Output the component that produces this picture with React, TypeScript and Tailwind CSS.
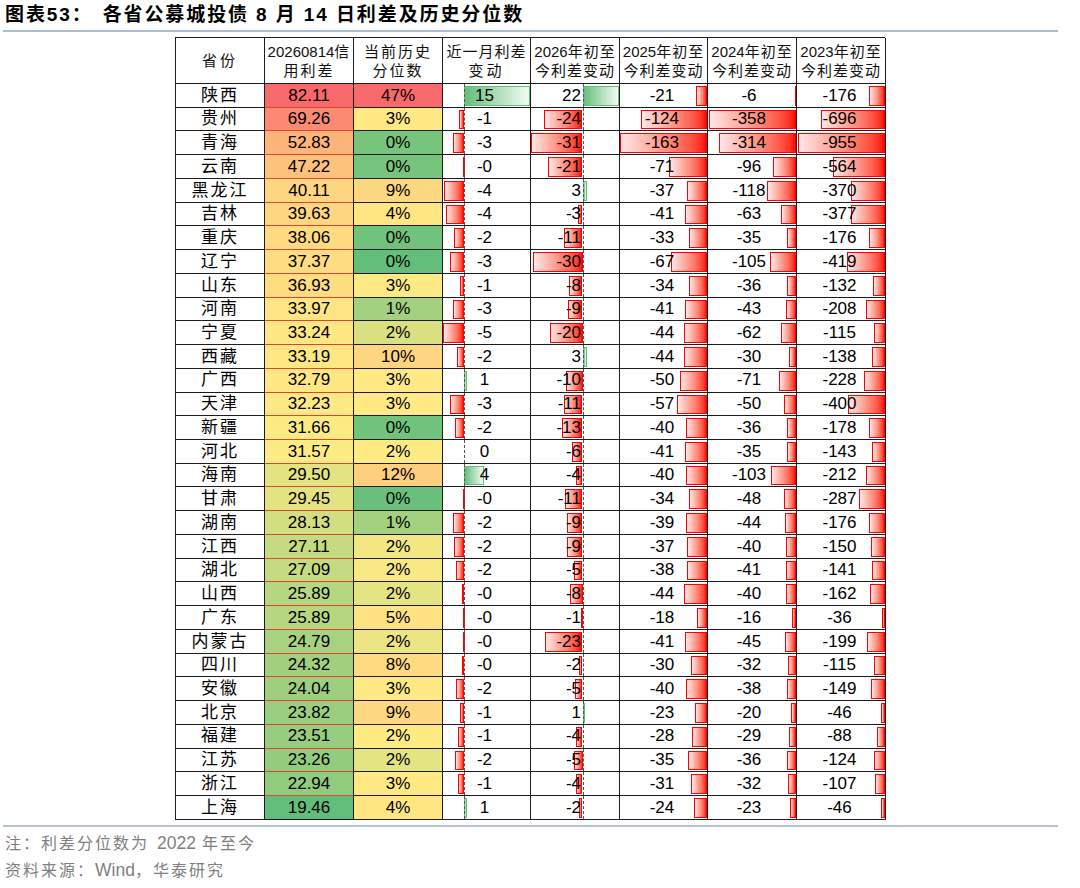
import React from 'react';

type Row = {
  p: string;
  s: number;
  pct: string;
  pv: number;
  md: string;
  m: number;
  d26: string;
  y26: number;
  y25: number;
  y24: number;
  y23: number;
};

const raw: [string, number, string, number, string, number, string, number, number, number, number][] = [
  ['陕西', 82.11, '47%', 47, '15', 15.3, '22', 22.3, -21, -6, -176],
  ['贵州', 69.26, '3%', 3.2, '-1', -1.1, '-24', -23.5, -124, -358, -696],
  ['青海', 52.83, '0%', 0.3, '-3', -2.6, '-31', -31, -163, -314, -955],
  ['云南', 47.22, '0%', 0.3, '-0', -0.2, '-21', -21, -71, -96, -564],
  ['黑龙江', 40.11, '9%', 9, '-4', -4.7, '3', 3, -37, -118, -370],
  ['吉林', 39.63, '4%', 4.1, '-4', -4.3, '-3', -3, -41, -63, -377],
  ['重庆', 38.06, '0%', 0.2, '-2', -2.4, '-11', -11, -33, -35, -176],
  ['辽宁', 37.37, '0%', 0, '-3', -3.2, '-30', -30, -67, -105, -419],
  ['山东', 36.93, '3%', 3, '-1', -0.9, '-8', -8, -34, -36, -132],
  ['河南', 33.97, '1%', 1, '-3', -2.6, '-9', -9, -41, -43, -208],
  ['宁夏', 33.24, '2%', 1.8, '-5', -4.9, '-20', -20, -44, -62, -115],
  ['西藏', 33.19, '10%', 10, '-2', -1.6, '3', 3, -44, -30, -138],
  ['广西', 32.79, '3%', 3, '1', 0.8, '-10', -10, -50, -71, -228],
  ['天津', 32.23, '3%', 3, '-3', -3.2, '-11', -11.5, -57, -50, -400],
  ['新疆', 31.66, '0%', 0.2, '-2', -2.1, '-13', -12.7, -40, -36, -178],
  ['河北', 31.57, '2%', 2.4, '0', 0, '-6', -6.4, -41, -35, -143],
  ['海南', 29.5, '12%', 12, '4', 4.6, '-4', -4, -40, -103, -212],
  ['甘肃', 29.45, '0%', 0.1, '-0', -0.2, '-11', -10.7, -34, -48, -287],
  ['湖南', 28.13, '1%', 1, '-2', -2.5, '-9', -9.4, -39, -44, -176],
  ['江西', 27.11, '2%', 2.2, '-2', -2.3, '-9', -9.4, -37, -40, -150],
  ['湖北', 27.09, '2%', 2.3, '-2', -1.8, '-5', -5.4, -38, -41, -141],
  ['山西', 25.89, '2%', 2.0, '-0', -0.45, '-8', -7.5, -44, -40, -162],
  ['广东', 25.89, '5%', 5, '-0', -0.2, '-1', -1.2, -18, -16, -36],
  ['内蒙古', 24.79, '2%', 2.1, '-0', -0.2, '-23', -22.6, -41, -45, -199],
  ['四川', 24.32, '8%', 8, '-0', -0.4, '-2', -2, -30, -32, -115],
  ['安徽', 24.04, '3%', 3, '-2', -1.9, '-5', -4.7, -40, -38, -149],
  ['北京', 23.82, '9%', 9, '-1', -1.0, '1', 0.8, -23, -20, -46],
  ['福建', 23.51, '2%', 2.4, '-1', -1.4, '-4', -4, -28, -29, -88],
  ['江苏', 23.26, '2%', 2.0, '-2', -2.1, '-5', -5, -35, -36, -124],
  ['浙江', 22.94, '3%', 3, '-1', -1.4, '-4', -3.7, -31, -32, -107],
  ['上海', 19.46, '4%', 4, '1', 0.8, '-2', -2, -24, -23, -46],
];

const rows: Row[] = raw.map((r) => ({
  p: r[0],
  s: r[1],
  pct: r[2],
  pv: r[3],
  md: r[4],
  m: r[5],
  d26: r[6],
  y26: r[7],
  y25: r[8],
  y24: r[9],
  y23: r[10],
}));

const GREEN = [99, 190, 123];
const YELLOW = [255, 235, 132];
const RED = [248, 105, 107];

function mix(a: number[], b: number[], t: number) {
  const c = a.map((x, i) => Math.round(x + (b[i] - x) * Math.max(0, Math.min(1, t))));
  return `rgb(${c[0]},${c[1]},${c[2]})`;
}

function scale3(v: number, min: number, mid: number, max: number) {
  if (v <= mid) return mix(GREEN, YELLOW, (v - min) / (mid - min));
  return mix(YELLOW, RED, (v - mid) / (max - mid));
}

function Bar({ v, axis, k }: { v: number; axis: number; k: number }) {
  if (v === 0) return null;
  const w = Math.max(1.5, Math.abs(v) * k);
  if (v < 0) {
    return (
      <div
        className="absolute top-[2px] bottom-[1px] border border-[#ff0000] bg-linear-to-l from-[#ff0000] to-[#ffe6e6]"
        style={{ left: axis - w, width: w }}
      />
    );
  }
  return (
    <div
      className="absolute top-[2px] bottom-[1px] border border-[#63be7b] bg-linear-to-r from-[#63be7b] to-[#f3faf5]"
      style={{ left: axis, width: w }}
    />
  );
}

function Axis({ at }: { at: number }) {
  return <div className="absolute top-0 bottom-0 w-0 border-l border-dashed border-[#555]" style={{ left: at }} />;
}

const cell = 'relative flex items-center border-r border-b border-[#1c1c1c] h-[23.74px] text-[17px] text-black overflow-hidden';

function Head({ a, b }: { a: React.ReactNode; b?: React.ReactNode }) {
  return (
    <div className="flex flex-col items-center justify-center border-r border-b border-[#1c1c1c] h-[46px] text-[15px] leading-[19px] tracking-[1px] text-[#111]">
      <div>{a}</div>
      {b && <div>{b}</div>}
    </div>
  );
}

export default function App() {
  const sSorted = rows.map((r) => r.s).sort((a, b) => a - b);
  const sMid = sSorted[Math.floor(sSorted.length / 2)];
  const pSorted = rows.map((r) => r.pv).sort((a, b) => a - b);
  const pMid = pSorted[Math.floor(pSorted.length / 2)];
  const sMin = sSorted[0];
  const sMax = sSorted[sSorted.length - 1];
  const pMin = pSorted[0];
  const pMax = pSorted[pSorted.length - 1];

  return (
    <div
      className="w-[1080px] h-[888px] bg-white overflow-hidden"
      style={{ fontFamily: '"Liberation Sans", "Noto Sans CJK SC", Arial, sans-serif' }}
    >
      <div className="h-[30px] pl-[5px] flex items-center text-[19px] font-bold tracking-[1.9px] text-black">
        <span>图表53：</span>
        <span className="ml-[10px]">各省公募城投债 8 月 14 日利差及历史分位数</span>
      </div>
      <div className="ml-[3px] w-[1055px] h-[2px] bg-[#a9bcd0]" />

      <div className="ml-[175px] mt-[5px] w-[710px] border-l border-t border-[#1c1c1c]">
        <div className="grid grid-cols-[89px_89px_89px_88px_89px_88px_89px_89px]">
          <Head a={<span className="tracking-[3px]">省份</span>} />
          <Head a={<><span className="tracking-normal">20260814</span>信</>} b={<span className="tracking-[2px]">用利差</span>} />
          <Head a={<span className="tracking-[2px]">当前历史</span>} b={<span className="tracking-[2px]">分位数</span>} />
          <Head a="近一月利差" b={<span className="tracking-[3px]">变动</span>} />
          <Head a={<><span className="tracking-normal">2026</span>年初至</>} b="今利差变动" />
          <Head a={<><span className="tracking-normal">2025</span>年初至</>} b="今利差变动" />
          <Head a={<><span className="tracking-normal">2024</span>年初至</>} b="今利差变动" />
          <Head a={<><span className="tracking-normal">2023</span>年初至</>} b="今利差变动" />

          {rows.map((r, i) => {
            const last = i === rows.length - 1;
            return (
              <React.Fragment key={r.p}>
                <div className={`${cell} justify-center text-[15px] tracking-[2px] text-[#111]`}>{r.p}</div>
                <div
                  className={`${cell} justify-center ${last ? '' : 'border-b-[#d8472f]'}`}
                  style={{ backgroundColor: scale3(r.s, sMin, sMid, sMax) }}
                >
                  {r.s.toFixed(2)}
                </div>
                <div className={`${cell} justify-center`} style={{ backgroundColor: scale3(r.pv, pMin, pMid, pMax) }}>
                  {r.pct}
                </div>
                <div className={`${cell} justify-center pr-[4px]`}>
                  <Bar v={r.m} axis={21} k={4.3} />
                  <Axis at={21} />
                  <span className="relative">{r.md}</span>
                </div>
                <div className={`${cell} justify-end pr-[38px]`}>
                  <Bar v={r.y26} axis={51.5} k={1.65} />
                  <Axis at={51.5} />
                  <span className="relative">{r.d26}</span>
                </div>
                <div className={`${cell} justify-center pr-[3px]`}>
                  <Bar v={r.y25} axis={87} k={0.532} />
                  <span className="relative">{r.y25}</span>
                </div>
                <div className={`${cell} justify-center pr-[6px]`}>
                  <Bar v={r.y24} axis={88} k={0.244} />
                  <span className="relative">{r.y24}</span>
                </div>
                <div className={`${cell} justify-center pr-[3px]`}>
                  <Bar v={r.y23} axis={88} k={0.0915} />
                  <span className="relative">{r.y23}</span>
                </div>
              </React.Fragment>
            );
          })}
        </div>
      </div>

      <div className="ml-[3px] mt-[5px] w-[1055px] h-[2px] bg-[#b3c3d3]" />
      <div className="pl-[5px] pt-[3px] text-[16px] leading-[26px] tracking-[2px] text-[#7f7f7f]">
        <div>
          注：利差分位数为<span className="tracking-normal ml-[8px] mr-[6px] text-[17.5px]">2022</span>年至今
        </div>
        <div>
          资料来源：<span className="tracking-normal text-[17.5px]">Wind</span>，华泰研究
        </div>
      </div>
    </div>
  );
}
